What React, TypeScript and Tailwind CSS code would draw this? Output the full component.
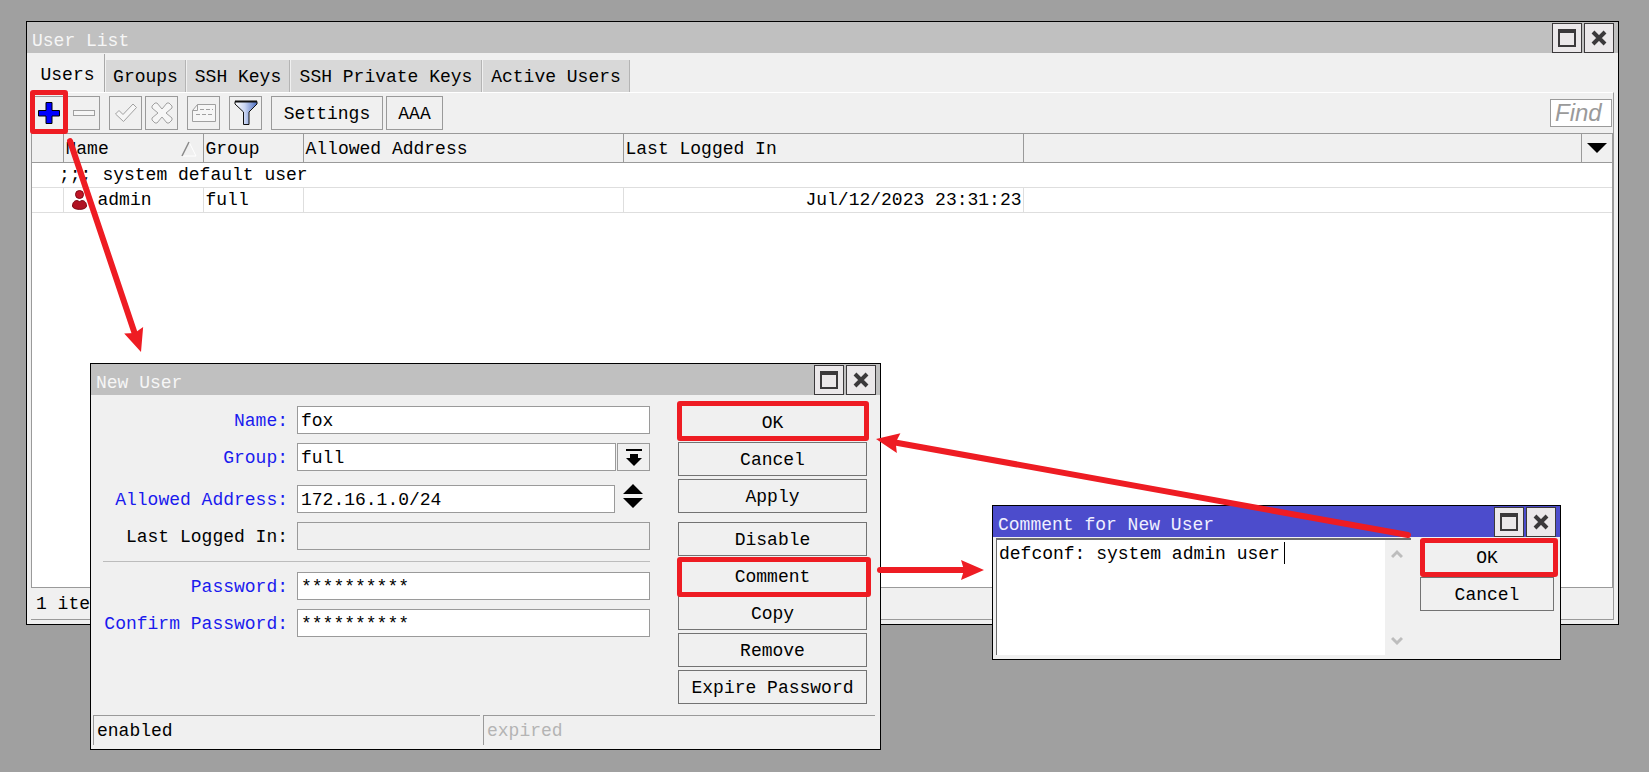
import type { ReactNode } from "react";

const RED = "#ee1c23";

function Maximize() {
  return (
    <svg width="18" height="18" viewBox="0 0 18 18" aria-hidden="true">
      <rect x="1" y="1" width="16" height="16" fill="none" stroke="#3b393b" strokeWidth="2" />
      <rect x="0" y="0" width="18" height="4" fill="#3b393b" />
    </svg>
  );
}

function Close() {
  return (
    <svg width="16" height="16" viewBox="0 0 16 16" aria-hidden="true">
      <path d="M2 2 L14 14 M14 2 L2 14" stroke="#3b393b" strokeWidth="4" fill="none" />
    </svg>
  );
}

function TitleBar({ title, active = false }: { title: string; active?: boolean }) {
  const button = "flex size-[30px] items-center justify-center border border-[#3b393b] bg-[#ebe8ea]";
  return (
    <header
      className={
        active
          ? "flex h-[31px] items-start bg-[#4c4ccc] pr-1 pl-[5px] text-[#f0f0ff]"
          : "flex h-[31px] items-start bg-[#c0c0c0] pr-1 pl-[5px] text-[#f6f6f6]"
      }
    >
      <h2 className="flex-1 pt-2">{title}</h2>
      <div className="flex gap-[2px] pt-px">
        <button type="button" aria-label="Maximize" className={button}>
          <Maximize />
        </button>
        <button type="button" aria-label="Close" className={button}>
          <Close />
        </button>
      </div>
    </header>
  );
}

function Tool({ label, children }: { label: string; children: ReactNode }) {
  return (
    <button
      type="button"
      aria-label={label}
      className="flex h-[34px] w-[33px] items-center justify-center border border-[#9a9a9a] bg-[#f0f0f0]"
    >
      {children}
    </button>
  );
}

function Highlight({ className }: { className: string }) {
  return <span className={`pointer-events-none absolute rounded-[3px] border-[5px] border-[#ee1c23] ${className}`} />;
}

function Action({ children }: { children: ReactNode }) {
  return (
    <button type="button" className="h-[34px] w-full border border-[#737373] bg-[#f0f0f0] pt-[2px]">
      {children}
    </button>
  );
}

function Arrow({ from, to }: { from: [number, number]; to: [number, number] }) {
  const length = Math.hypot(to[0] - from[0], to[1] - from[1]);
  const angle = (Math.atan2(to[1] - from[1], to[0] - from[0]) * 180) / Math.PI;
  return (
    <g transform={`translate(${to[0]} ${to[1]}) rotate(${angle})`}>
      <path d={`M${-length} 0 H-18`} stroke={RED} strokeWidth="6" strokeLinecap="round" />
      <path d="M0 0 L-23 -10 L-20 0 L-23 10 Z" fill={RED} />
    </g>
  );
}

const TABS = ["Users", "Groups", "SSH Keys", "SSH Private Keys", "Active Users"];
const TAB_WIDTHS = ["w-[74px]", "w-[80px]", "w-[103px]", "w-[191px]", "w-[147px]"];

function UserList() {
  const head = "border-r border-[#9a9a9a] pt-[2px] pl-[2px] text-left font-normal";
  return (
    <section className="absolute top-[21px] right-[30px] bottom-[147px] left-[26px] flex flex-col border border-black bg-[#f0f0f0]">
      <TitleBar title="User List" />
      <div className="flex h-[39px] items-end gap-px pl-1" role="tablist">
        {TABS.map((tab, i) => (
          <button
            key={tab}
            type="button"
            role="tab"
            aria-selected={i === 0}
            className={`${TAB_WIDTHS[i]} ${
              i === 0
                ? "h-[38px] border-r border-[#a8a8a8] bg-[#f0f0f0] pt-1"
                : "h-[32px] border-r border-[#b4b4b4] bg-[#d8d8d8] pt-[2px]"
            }`}
          >
            {tab}
          </button>
        ))}
      </div>
      <div className="mr-1 mb-1 ml-1 flex flex-1 flex-col border-t border-r border-b border-t-white border-r-[#9a9a9a] border-b-[#9a9a9a]">
        <div className="flex h-[40px] items-center pl-px">
          <div className="relative mr-[2px] flex">
            <Tool label="Add">
              <svg width="22" height="22" viewBox="0 0 22 22">
                <path d="M8 .5h6v8h7.500v5.500H14v7.500H8V14H.5V8.500H8z" fill="#0000ff" stroke="#000" />
              </svg>
            </Tool>
            <Highlight className="-top-[6px] -left-[2px] h-[44px] w-[38px]" />
          </div>
          <Tool label="Remove">
            <svg width="22" height="6" viewBox="0 0 22 6">
              <rect x=".5" y=".5" width="21" height="5" fill="#f6f6f6" stroke="#a0a0a0" />
            </svg>
          </Tool>
          <div className="ml-[9px] flex gap-[3px]">
            <Tool label="Enable">
              <svg width="22" height="20" viewBox="0 0 22 20">
                <path d="M.5 11 L4 7.500 L8 11.500 L18 1 L21.500 4.500 L8.500 18.500 Z" fill="#f6f6f6" stroke="#a0a0a0" />
              </svg>
            </Tool>
            <Tool label="Disable">
              <svg width="22" height="22" viewBox="0 0 22 22">
                <path
                  d="M1 4 L4 1 H6 L11 7 L16 1 H18 L21 4 V6 L15 11 L21 16 V18 L18 21 H16 L11 15 L6 21 H4 L1 18 V16 L7 11 L1 6 Z"
                  fill="#f6f6f6"
                  stroke="#a0a0a0"
                />
              </svg>
            </Tool>
          </div>
          <div className="ml-[9px] flex gap-[9px]">
            <Tool label="Comment">
              <svg width="25" height="20" viewBox="0 0 25 20" fill="none" stroke="#a0a0a0">
                <path d="M6.500 1.500H24.500V18.500H1.500V7.500Z" fill="#f6f6f6" />
                <path d="M1.500 7.500H6.500V1.500" />
                <path d="M9 6.500h13M5 11.500h17" strokeDasharray="4 2" />
              </svg>
            </Tool>
            <Tool label="Filter">
              <svg width="24" height="26" viewBox="0 0 24 26">
                <defs>
                  <linearGradient id="funnel" x1="0" x2="1">
                    <stop offset="0" stopColor="#ffffff" />
                    <stop offset=".45" stopColor="#c9d5f2" />
                    <stop offset="1" stopColor="#4a6cc0" />
                  </linearGradient>
                </defs>
                <path d="M1 1.500H23V4L15 12V24.500H9.500V12L1 4Z" fill="url(#funnel)" stroke="#111" />
                <path d="M1 1.500H23" stroke="#111" strokeWidth="2" />
              </svg>
            </Tool>
            <div className="flex gap-[3px]">
              <button type="button" className="h-[34px] w-[112px] border border-[#9a9a9a] pt-[2px]">
                Settings
              </button>
              <button type="button" className="h-[34px] w-[57px] border border-[#9a9a9a] pt-[2px]">
                AAA
              </button>
            </div>
          </div>
          <input
            aria-label="Find"
            placeholder="Find"
            className="mr-px ml-auto h-[28px] w-[62px] border border-[#9a9a9a] bg-white pl-1 font-['Liberation_Sans',sans-serif] text-[24px] leading-none italic placeholder:text-[#9a9a9a]"
          />
        </div>
        <div className="flex flex-1 flex-col border border-[#9a9a9a] bg-white">
          <table className="w-full table-fixed border-collapse">
            <colgroup>
              <col className="w-[31px]" />
              <col className="w-[140px]" />
              <col className="w-[100px]" />
              <col className="w-[320px]" />
              <col className="w-[400px]" />
              <col />
              <col className="w-[31px]" />
            </colgroup>
            <thead>
              <tr className="h-[28px] border-b border-[#9a9a9a] bg-[#f0f0f0]">
                <th className={head} />
                <th className={head}>
                  <div className="flex items-center justify-between pr-[6px]">
                    Name
                    <svg width="16" height="16" viewBox="0 0 16 16" fill="none">
                      <path d="M8 1 L15 15 H1" stroke="#fff" />
                      <path d="M1 15 L8 1" stroke="#8a8a8a" strokeWidth="1.500" />
                    </svg>
                  </div>
                </th>
                <th className={head}>Group</th>
                <th className={head}>Allowed Address</th>
                <th className={head}>Last Logged In</th>
                <th className={head} />
                <th>
                  <button type="button" aria-label="Columns" className="block w-full">
                    <svg width="20" height="10" viewBox="0 0 20 10" className="mx-auto">
                      <path d="M0 0H20L10 10Z" fill="#000" />
                    </svg>
                  </button>
                </th>
              </tr>
            </thead>
            <tbody>
              <tr className="h-[25px] border-b border-[#dedede]">
                <td colSpan={7} className="pt-px pl-[27px]">
                  <span className="mr-[11px]">;;;</span>system default user
                </td>
              </tr>
              <tr className="h-[25px] border-b border-[#dedede]">
                <td className="border-r border-[#dedede]" />
                <td className="border-r border-[#dedede] pl-2">
                  <div className="flex items-center gap-[11px]">
                    <svg width="15" height="20" viewBox="0 0 15 20">
                      <circle cx="7.500" cy="4.500" r="4" fill="#c01525" stroke="#7d0713" />
                      <path
                        d="M.5 16 C.5 12 3 10.500 5 10.500 L7.500 11.500 L10 10.500 C12 10.500 14.500 12 14.500 16 C14.500 20.500 .5 20.500 .5 16 Z"
                        fill="#b01222"
                        stroke="#7d0713"
                      />
                    </svg>
                    admin
                  </div>
                </td>
                <td className="border-r border-[#dedede] pl-[2px]">full</td>
                <td className="border-r border-[#dedede]" />
                <td className="border-r border-[#dedede] pr-px text-right">Jul/12/2023 23:31:23</td>
                <td colSpan={2} />
              </tr>
            </tbody>
          </table>
        </div>
        <p className="flex h-[31px] items-center pl-[5px]">1 item</p>
      </div>
    </section>
  );
}

function Field({ id, label, plain = false, children }: { id: string; label: string; plain?: boolean; children: ReactNode }) {
  return (
    <div className="flex h-[28px] items-center gap-[9px]">
      <label htmlFor={id} className={plain ? "w-[185px] pt-[2px] text-right" : "w-[185px] pt-[2px] text-right text-[#1a1aee]"}>
        {label}
      </label>
      {children}
    </div>
  );
}

function NewUser() {
  const box = "h-[28px] min-w-0 flex-1 border border-[#9a9a9a] bg-white pt-[2px] pl-[3px]";
  return (
    <section className="absolute top-[363px] left-[90px] flex w-[791px] flex-col border border-black bg-[#f0f0f0]">
      <TitleBar title="New User" />
      <div className="flex justify-between pt-[10px] pr-[13px] pl-[12px]">
        <form className="flex w-[547px] flex-col gap-[9px] pt-px">
          <Field id="name" label="Name:">
            <input id="name" className={box} defaultValue="fox" />
          </Field>
          <Field id="group" label="Group:">
            <div className="flex flex-1 gap-px">
              <input id="group" className={box} defaultValue="full" />
              <button
                type="button"
                aria-label="Choose group"
                className="flex h-[28px] w-[33px] items-center justify-center border border-[#9a9a9a]"
              >
                <svg width="16" height="17" viewBox="0 0 16 17">
                  <path d="M0 0H16V2H0Z M4 5H12V9H16L8 17L0 9H4Z" fill="#000" />
                </svg>
              </button>
            </div>
          </Field>
          <div className="pt-[5px]">
            <Field id="address" label="Allowed Address:">
              <div className="flex flex-1 items-center">
                <input id="address" className={box} defaultValue="172.16.1.0/24" />
                <button type="button" aria-label="Add or remove address" className="flex w-[35px] justify-center pb-[6px] pl-px">
                  <svg width="20" height="24" viewBox="0 0 20 24">
                    <path d="M10 0L20 10H0Z M0 14H20L10 24Z" fill="#000" />
                  </svg>
                </button>
              </div>
            </Field>
          </div>
          <Field id="last" label="Last Logged In:" plain>
            <input id="last" readOnly className="h-[28px] min-w-0 flex-1 border border-[#9a9a9a]" />
          </Field>
          <hr className="mt-[2px] mb-px border-[#bcbcbc]" />
          <Field id="password" label="Password:">
            <input id="password" className={box} defaultValue="**********" />
          </Field>
          <Field id="confirm" label="Confirm Password:">
            <input id="confirm" className={box} defaultValue="**********" />
          </Field>
        </form>
        <div className="flex w-[189px] flex-col gap-[3px]">
          <div className="relative">
            <Action>OK</Action>
            <Highlight className="-top-1 -left-px h-[40px] w-[192px]" />
          </div>
          <Action>Cancel</Action>
          <Action>Apply</Action>
          <div className="pt-[6px]">
            <Action>Disable</Action>
          </div>
          <div className="relative">
            <Action>Comment</Action>
            <Highlight className="-top-[2px] -left-px h-[40px] w-[194px]" />
          </div>
          <Action>Copy</Action>
          <Action>Remove</Action>
          <Action>Expire Password</Action>
        </div>
      </div>
      <footer className="mt-[11px] flex gap-[3px] pr-[5px] pb-1 pl-[2px]">
        <p className="flex h-[30px] w-[387px] items-center border-t border-l border-[#9a9a9a] pt-px pl-[3px]">enabled</p>
        <p className="flex h-[30px] flex-1 items-center border-t border-l border-[#9a9a9a] pt-px pl-[3px] text-[#b4b4b4]">
          expired
        </p>
      </footer>
    </section>
  );
}

function Chevron({ d }: { d: string }) {
  return (
    <svg width="12" height="10" viewBox="0 0 12 10">
      <path d={d} fill="none" stroke="#bdbdbd" strokeWidth="3" />
    </svg>
  );
}

function CommentWindow() {
  return (
    <section className="absolute top-[505px] left-[992px] flex w-[569px] flex-col border border-black bg-[#f0f0f0]">
      <TitleBar title="Comment for New User" active />
      <div className="flex gap-[9px] pt-px pr-[6px] pb-1 pl-[3px]">
        <div className="flex h-[117px] flex-1 border-t-2 border-l border-[#6d6d6d] bg-white">
          <div className="relative flex-1">
            <textarea
              aria-label="Comment"
              className="block h-full w-full resize-none overflow-hidden bg-white pt-[3px] pl-[2px]"
              defaultValue="defconf: system admin user"
            />
            <span className="absolute top-[2px] left-[287px] h-[22px] w-px bg-black" />
          </div>
          <div className="flex w-[26px] flex-col items-center justify-between bg-[#f0f0f0] py-[9px] pr-[2px]">
            <Chevron d="M1 8 L6 3 L11 8" />
            <Chevron d="M1 2 L6 7 L11 2" />
          </div>
        </div>
        <div className="flex w-[134px] flex-col gap-[3px] pt-[2px]">
          <div className="relative">
            <Action>OK</Action>
            <Highlight className="-top-[2px] left-0 h-[39px] w-[138px]" />
          </div>
          <Action>Cancel</Action>
        </div>
      </div>
    </section>
  );
}

export default function App() {
  return (
    <main className="relative min-h-screen overflow-hidden bg-[#a0a0a0] font-['Liberation_Mono',monospace] text-[18px] leading-[22px] text-black">
      <UserList />
      <NewUser />
      <CommentWindow />
      <svg className="pointer-events-none absolute top-0 left-0" width="1649" height="772" aria-hidden="true">
        <Arrow from={[70, 141]} to={[141, 352]} />
        <Arrow from={[1408, 535]} to={[876, 439]} />
        <Arrow from={[880, 570]} to={[984, 570]} />
      </svg>
    </main>
  );
}
